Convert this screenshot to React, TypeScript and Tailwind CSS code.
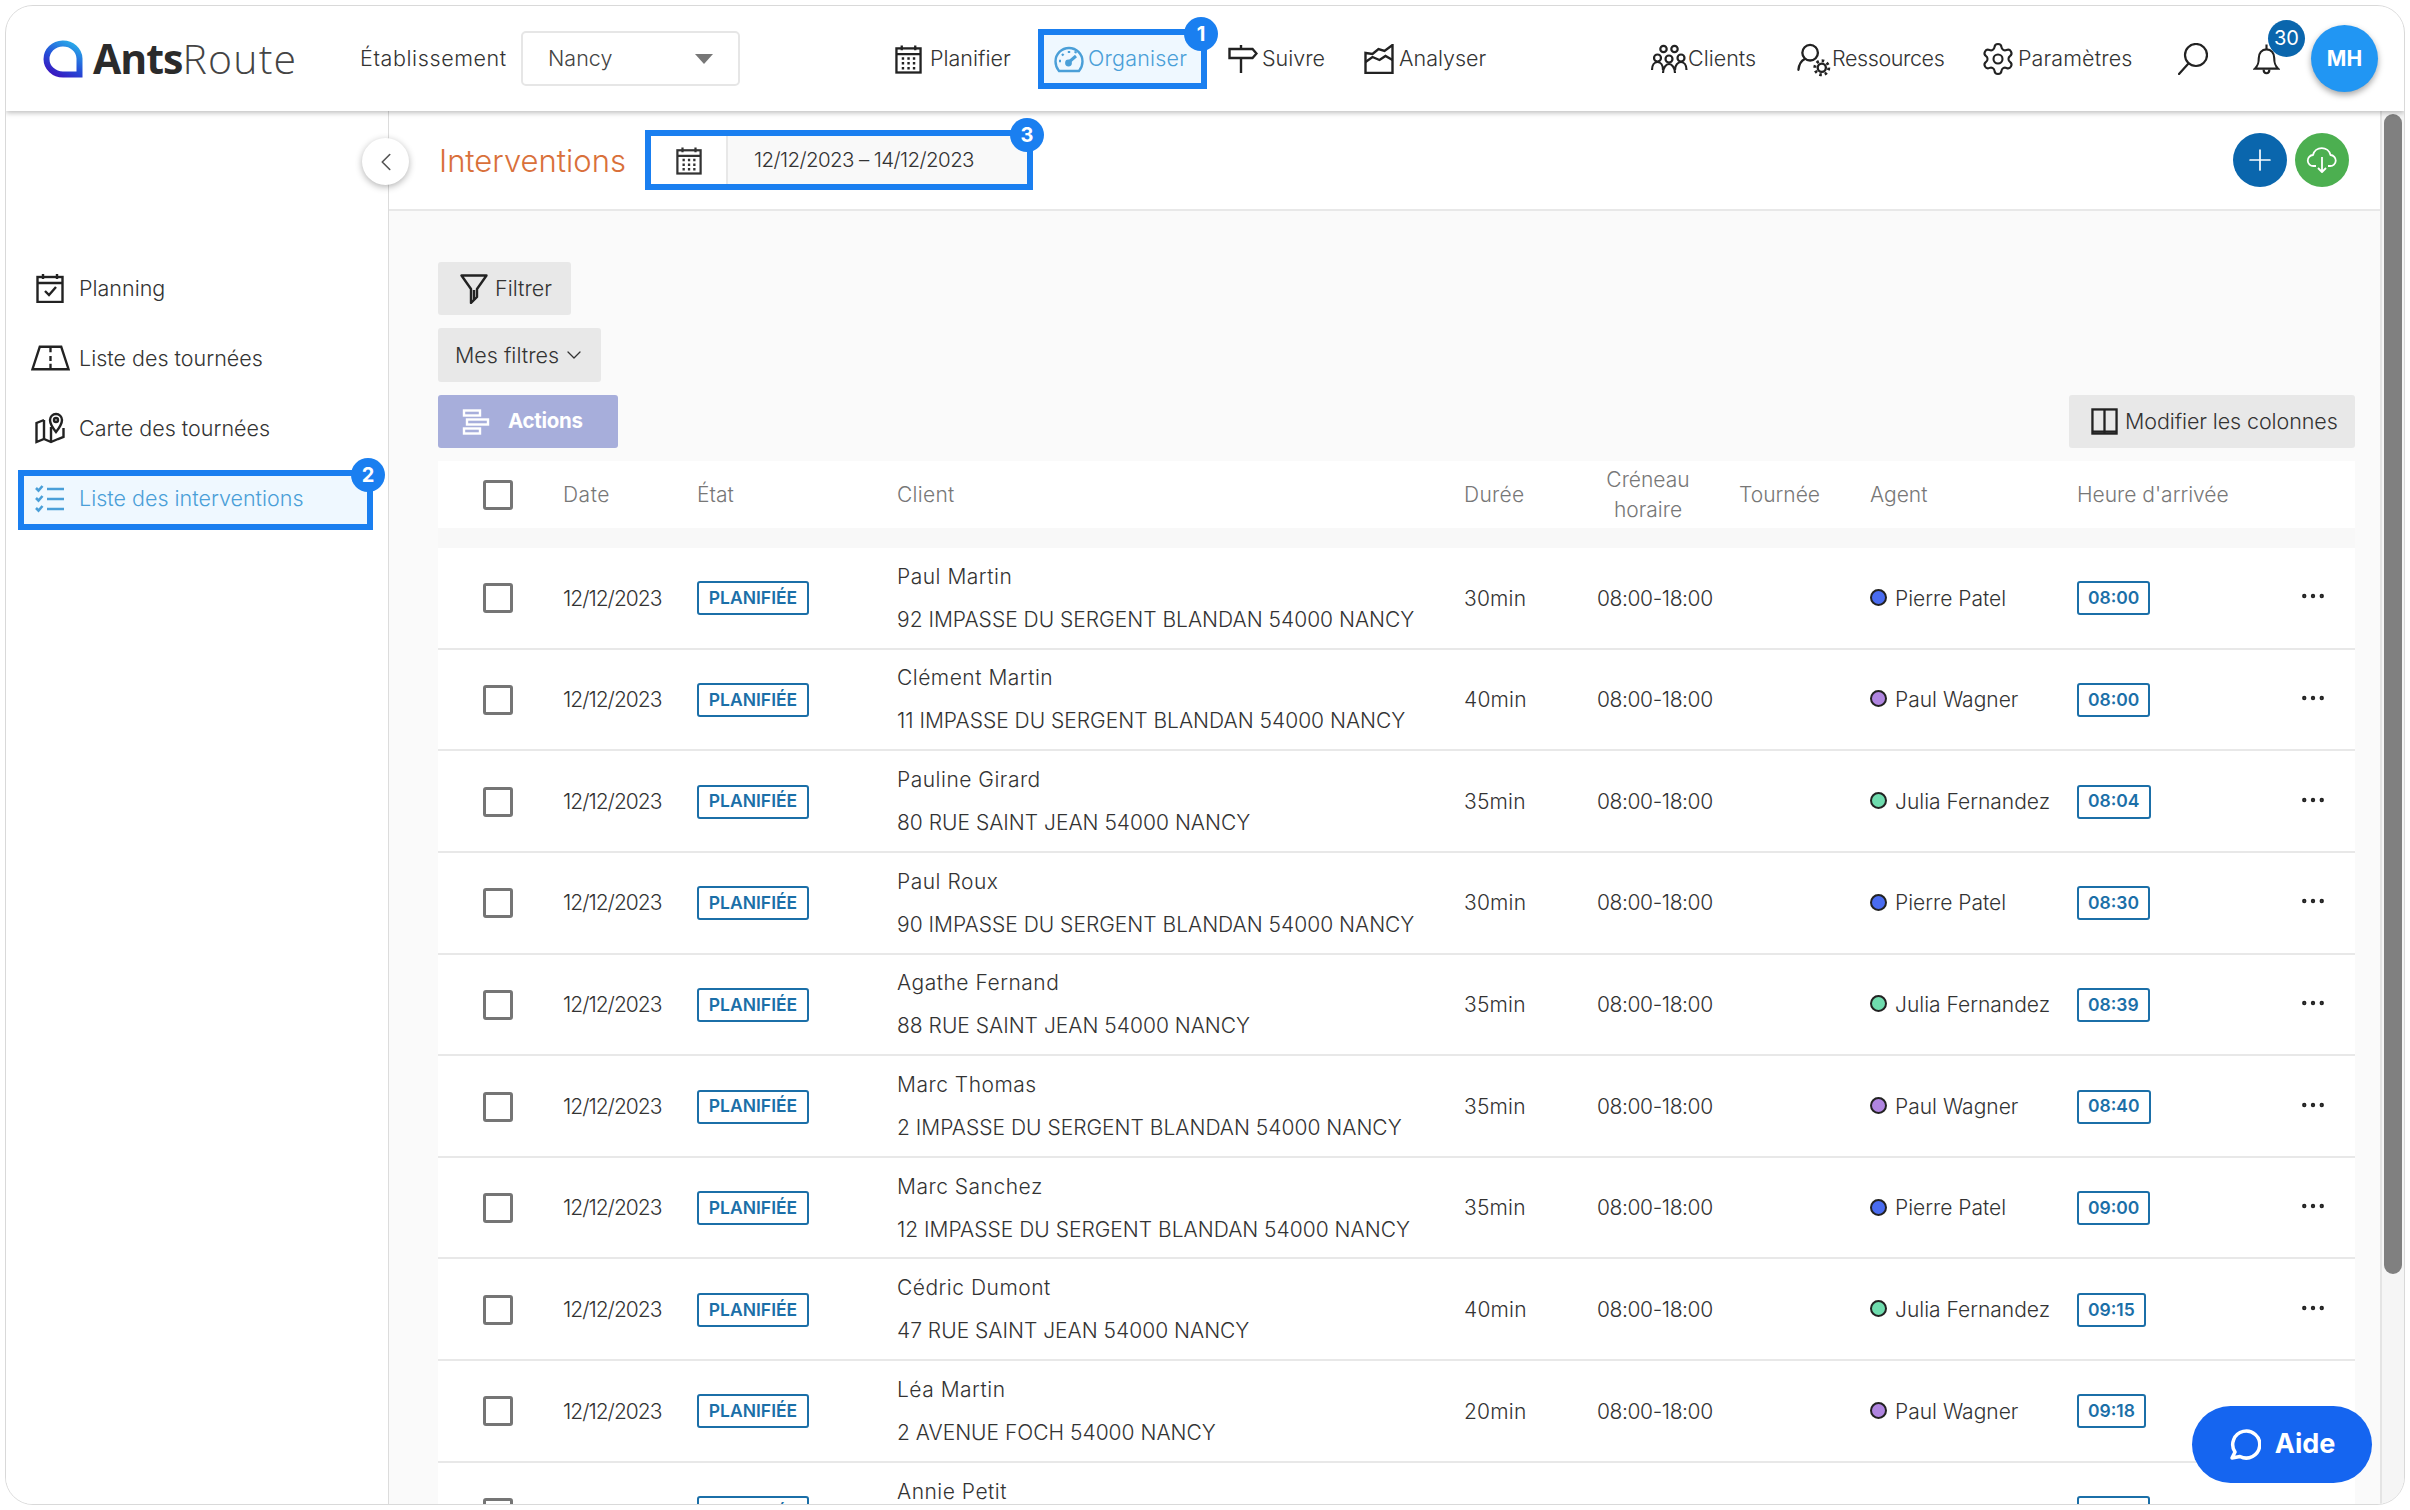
import React from 'react';
import { ChevronLeft, ChevronDown, Plus, MoreHorizontal, Settings } from 'lucide-react';

type IconProps = { className?: string };

const s = { fill: 'none', stroke: 'currentColor', strokeWidth: 2.4 };

const CalendarIcon: React.FC<IconProps> = ({ className }) => (
  <svg viewBox="0 0 28 30" className={className} {...s}>
    <rect x="1.5" y="4" width="25" height="25" />
    <path d="M1.500 10h25" />
    <path d="M7 1v5M21 1v5" />
    <path d="M7 14.500h2.500M12.800 14.500h2.500M18.500 14.500h2.500M7 19.500h2.500M12.800 19.500h2.500M18.500 19.500h2.500M7 24.500h2.500M12.800 24.500h2.500M18.500 24.500h2.500" strokeWidth="2.600" />
  </svg>
);

const GaugeIcon: React.FC<IconProps> = ({ className }) => (
  <svg viewBox="0 0 30 30" className={className} {...s}>
    <path d="M5 27C2.500 24 1.500 21 1.500 17.500a13.500 13.500 0 0 1 27 0C28.500 21 27.500 24 25 27Z" />
    <path d="M15 18l7-6" strokeWidth="3" />
    <circle cx="14.500" cy="19" r="2.200" fill="currentColor" />
    <path d="M5 17h2M8 10l1.500 1.500M15 7v2M22 7.500l-1 1.500" />
  </svg>
);

const SignIcon: React.FC<IconProps> = ({ className }) => (
  <svg viewBox="0 0 30 30" className={className} {...s}>
    <path d="M1.500 5h23l4 4.500-4 4.500h-23Z" />
    <path d="M13 1v4M13 14v15" />
  </svg>
);

const ChartIcon: React.FC<IconProps> = ({ className }) => (
  <svg viewBox="0 0 30 30" className={className} {...s}>
    <path d="M1.500 9v20h27V1l-8 6-6-2-6 5Z" />
    <path d="M1.500 18l7-5 7 3 6-4 7 4" />
  </svg>
);

const PeopleIcon: React.FC<IconProps> = ({ className }) => (
  <svg viewBox="0 0 38 30" className={className} fill="none" stroke="currentColor" strokeWidth="2.200">
    <circle cx="13.500" cy="5" r="3.200" />
    <circle cx="24.500" cy="5" r="3.200" />
    <circle cx="7.500" cy="14" r="3.500" />
    <circle cx="19" cy="15" r="3.500" />
    <circle cx="31" cy="14" r="3.500" />
    <path d="M2 26c0-5 2.500-8 5.500-8s5.500 3 5.500 8M13 29c0-5 3-9 6-9s6 4 6 9M25 26c0-5 3-8 6-8s5.500 3 5.500 8" />
  </svg>
);

const UserGearIcon: React.FC<IconProps> = ({ className }) => (
  <svg viewBox="0 0 36 34" className={className} fill="none" stroke="currentColor" strokeWidth="2.400">
    <circle cx="13.500" cy="9.500" r="8" />
    <path d="M8 16C4 18 2 22 1.500 27" strokeLinecap="round" />
    <circle cx="25.500" cy="25" r="4.200" />
    <circle cx="25.500" cy="25" r="7.200" strokeDasharray="2.600 3" strokeWidth="3" />
  </svg>
);

const SearchIcon: React.FC<IconProps> = ({ className }) => (
  <svg viewBox="0 0 30 32" className={className} fill="none" stroke="currentColor" strokeWidth="2.200">
    <circle cx="18" cy="12" r="11" />
    <path d="M10 21L1 31" strokeLinecap="round" />
  </svg>
);

const BellIcon: React.FC<IconProps> = ({ className }) => (
  <svg viewBox="0 0 28 32" className={className} fill="none" stroke="currentColor" strokeWidth="2.200">
    <path d="M2 26c3-3 4-5 4-11 0-5 3-9 8-9s8 4 8 9c0 6 1 8 4 11Z" />
    <path d="M14 1v5M11 27c0 5 6 5 6 0" />
  </svg>
);

const CloudIcon: React.FC<IconProps> = ({ className }) => (
  <svg viewBox="0 0 32 32" className={className} fill="none" stroke="currentColor" strokeWidth="1.800" strokeLinejoin="round">
    <path d="M10 22H7.500a5.500 5.500 0 0 1-.5-11 9 9 0 0 1 17.500 0 5.500 5.500 0 0 1-.5 11h-2" />
    <path d="M16 13v15M12 24l4 4 4-4" />
  </svg>
);

const PlanningIcon: React.FC<IconProps> = ({ className }) => (
  <svg viewBox="0 0 28 30" className={className} fill="none" stroke="currentColor" strokeWidth="2.400">
    <rect x="1.500" y="4" width="25" height="25" />
    <path d="M1.500 10h25M7 1v5M21 1v5" />
    <path d="M9 18l4 4 7-8" />
  </svg>
);

const RoadIcon: React.FC<IconProps> = ({ className }) => (
  <svg viewBox="0 0 40 26" className={className} fill="none" stroke="currentColor" strokeWidth="2.400">
    <path d="M9 1.500h22L38.500 24.500h-37Z" />
    <path d="M20 2v5M20 11v5M20 19v6" />
  </svg>
);

const MapIcon: React.FC<IconProps> = ({ className }) => (
  <svg viewBox="0 0 30 32" className={className} fill="none" stroke="currentColor" strokeWidth="2.400">
    <path d="M9 8L1.500 11v19l7.500-3 7 3 7-3 5.500-2V16" />
    <path d="M9 8v19M16 15v15" />
    <path d="M21 20c-4-5-6-8-6-12a6 6 0 0 1 12 0c0 4-2 7-6 12Z" fill="#fff" />
    <circle cx="21" cy="8" r="2" />
  </svg>
);

const ChecklistIcon: React.FC<IconProps> = ({ className }) => (
  <svg viewBox="0 0 30 28" className={className} fill="none" stroke="currentColor" strokeWidth="2.600">
    <path d="M12 4h17M12 14h17M12 24h17" />
    <path d="M1 3l2.500 2.500L7.500 1M1 13l2.500 2.500L7.500 11M1 23l2.500 2.500L7.500 21" />
  </svg>
);

const FunnelIcon: React.FC<IconProps> = ({ className }) => (
  <svg viewBox="0 0 28 30" className={className} fill="none" stroke="currentColor" strokeWidth="2.400" strokeLinejoin="round">
    <path d="M1.500 1.500h25L17 15v8l-6 6V15Z" />
    <path d="M14 16v10" />
  </svg>
);

const ActionsIcon: React.FC<IconProps> = ({ className }) => (
  <svg viewBox="0 0 28 26" className={className} fill="none" stroke="currentColor" strokeWidth="2.400">
    <rect x="2" y="1.500" width="16" height="5" />
    <rect x="5" y="10.500" width="21" height="5" />
    <rect x="2" y="19.500" width="16" height="5" />
  </svg>
);

const ColumnsIcon: React.FC<IconProps> = ({ className }) => (
  <svg viewBox="0 0 28 28" className={className} fill="none" stroke="currentColor" strokeWidth="2.400">
    <rect x="1.500" y="1.500" width="25" height="25" />
    <path d="M14 1.500v25" />
    <path d="M1.500 24.500h25" />
  </svg>
);

const Logo: React.FC = () => (
  <svg viewBox="0 0 40 38" className="w-[40px] h-[38px] shrink-0" fill="none">
    <defs>
      <linearGradient id="logoGrad" x1="0.8" y1="0" x2="0.2" y2="1">
        <stop offset="0" stopColor="#2aa7e8" />
        <stop offset="0.55" stopColor="#2450d8" />
        <stop offset="1" stopColor="#3a18c0" />
      </linearGradient>
    </defs>
    <path d="M36.500 34.500V18.500a16.500 15.500 0 1 0-16.500 16Z" stroke="url(#logoGrad)" strokeWidth="6" />
  </svg>
);

const Badge: React.FC<{ n: number; className: string }> = ({ n, className }) => (
  <span className={`absolute w-[34px] h-[34px] rounded-full bg-[#1a7ff0] text-white font-bold text-[20px] flex items-center justify-center z-20 ${className}`}>
    {n}
  </span>
);

const NavItem: React.FC<{ icon: React.ReactNode; label: string; className: string; labelClass?: string }> = ({ icon, label, className, labelClass }) => (
  <div className={`flex items-center shrink-0 ${className}`}>
    {icon}
    <span className={labelClass}>{label}</span>
  </div>
);

const SideItem: React.FC<{ icon: React.ReactNode; label: string }> = ({ icon, label }) => (
  <div className="flex items-center h-[70px] pl-[20px]">
    <div className="w-[48px] flex justify-center">{icon}</div>
    <span className="text-[21.5px] ml-[5px]">{label}</span>
  </div>
);

interface Row {
  name: string;
  address: string;
  duration: string;
  agent: 'Pierre Patel' | 'Paul Wagner' | 'Julia Fernandez';
  time: string;
}

const rows: Row[] = [
  { name: 'Paul Martin', address: '92 IMPASSE DU SERGENT BLANDAN 54000 NANCY', duration: '30min', agent: 'Pierre Patel', time: '08:00' },
  { name: 'Clément Martin', address: '11 IMPASSE DU SERGENT BLANDAN 54000 NANCY', duration: '40min', agent: 'Paul Wagner', time: '08:00' },
  { name: 'Pauline Girard', address: '80 RUE SAINT JEAN 54000 NANCY', duration: '35min', agent: 'Julia Fernandez', time: '08:04' },
  { name: 'Paul Roux', address: '90 IMPASSE DU SERGENT BLANDAN 54000 NANCY', duration: '30min', agent: 'Pierre Patel', time: '08:30' },
  { name: 'Agathe Fernand', address: '88 RUE SAINT JEAN 54000 NANCY', duration: '35min', agent: 'Julia Fernandez', time: '08:39' },
  { name: 'Marc Thomas', address: '2 IMPASSE DU SERGENT BLANDAN 54000 NANCY', duration: '35min', agent: 'Paul Wagner', time: '08:40' },
  { name: 'Marc Sanchez', address: '12 IMPASSE DU SERGENT BLANDAN 54000 NANCY', duration: '35min', agent: 'Pierre Patel', time: '09:00' },
  { name: 'Cédric Dumont', address: '47 RUE SAINT JEAN 54000 NANCY', duration: '40min', agent: 'Julia Fernandez', time: '09:15' },
  { name: 'Léa Martin', address: '2 AVENUE FOCH 54000 NANCY', duration: '20min', agent: 'Paul Wagner', time: '09:18' },
  { name: 'Annie Petit', address: '5 AVENUE FOCH 54000 NANCY', duration: '20min', agent: 'Pierre Patel', time: '09:30' },
];

const agentDot = (agent: Row['agent']) => {
  if (agent === 'Pierre Patel') return 'bg-[#4a6cf0]';
  if (agent === 'Paul Wagner') return 'bg-[#b085e0]';
  return 'bg-[#6fdcae]';
};

const gridCols = 'grid grid-cols-[125px_134px_200px_567px_133px_142px_131px_207px_225px_53px] items-center';

const Checkbox: React.FC = () => (
  <div className="w-[30px] h-[30px] ml-[45px] border-[3px] border-[#757575] rounded-[3px] bg-white" />
);

const Tag: React.FC<{ children: React.ReactNode; className: string }> = ({ children, className }) => (
  <span className={`flex items-center justify-center justify-self-start h-[34px] border-2 border-[#1b6fa8] rounded-[3px] text-[#1b6fa8] font-semibold text-[17.5px] ${className}`}>
    {children}
  </span>
);

export default function App() {
  return (
    <div className="w-[2410px] h-[1510px] bg-white p-[5px] font-['Inter','Liberation_Sans',sans-serif] text-[#333] overflow-hidden">
      <div className="relative flex flex-col h-full rounded-[28px] border border-[#d9d9d9] overflow-hidden font-light">
        {/* top bar */}
        <header className="relative z-10 flex items-center h-[105px] shrink-0 bg-white shadow-[0_2px_5px_rgba(0,0,0,0.25)] text-[21.5px]">
          <div className="flex items-center ml-[37px] w-[318px] shrink-0">
            <Logo />
            <span className="ml-[10px] text-[41px] leading-none text-[#2b2b2b] font-['Open_Sans',sans-serif]">
              <span className="font-bold tracking-[-1px]">Ants</span>
              <span className="font-light tracking-[1.2px] text-[#444]">Route</span>
            </span>
          </div>
          <span className="w-[160px] shrink-0 tracking-[0.6px] -ml-[1px] mr-[1px]">Établissement</span>
          <div className="flex items-center justify-between w-[219px] h-[55px] shrink-0 border-2 border-[#e6e6e6] rounded-[5px] px-[25px] text-[#444]">
            <span>Nancy</span>
            <span className="w-0 h-0 border-x-[9px] border-x-transparent border-t-[10px] border-t-[#777]" />
          </div>
          <NavItem className="ml-[155px] w-[143px]" icon={<CalendarIcon className="w-[27px] h-[30px] text-[#222] mr-[8px]" />} label="Planifier" />
          <div className="relative flex items-center w-[169px] h-[60px] shrink-0 border-[6px] border-[#1a7ff0] bg-[#eff8ff] pl-[10px] text-[#4a9fd8]">
            <GaugeIcon className="w-[30px] h-[30px] mr-[4px]" />
            <span className="tracking-[0.2px]">Organiser</span>
            <Badge n={1} className="right-[-17px] top-[-18px]" />
          </div>
          <NavItem className="ml-[21px] w-[136px]" icon={<SignIcon className="w-[30px] h-[30px] text-[#222] mr-[4px]" />} label="Suivre" />
          <NavItem className="w-[286px]" icon={<ChartIcon className="w-[30px] h-[30px] text-[#222] mr-[5px]" />} label="Analyser" />
          <NavItem className="w-[147px]" icon={<PeopleIcon className="w-[38px] h-[30px] text-[#222]" />} label="Clients" />
          <NavItem className="w-[185px]" icon={<UserGearIcon className="w-[35px] h-[34px] text-[#222] mt-[3px]" />} label="Ressources" labelClass="tracking-[-0.4px]" />
          <NavItem className="w-[196px]" icon={<Settings className="w-[36px] h-[36px] text-[#222] mr-[2px] -ml-[2px]" strokeWidth={1.4} />} label="Paramètres" labelClass="tracking-[0.1px]" />
          <SearchIcon className="w-[30px] h-[32px] shrink-0 text-[#222]" />
          <div className="relative ml-[45px] shrink-0">
            <BellIcon className="w-[27px] h-[32px] text-[#222]" />
            <span className="absolute left-[15px] top-[-23px] w-[37px] h-[37px] rounded-full bg-[#0a66ad] text-white text-[20px] font-normal flex items-center justify-center">30</span>
          </div>
          <div className="ml-[31px] w-[67px] h-[67px] shrink-0 rounded-full bg-[#2196f3] text-white text-[21px] font-bold flex items-center justify-center shadow-[0_3px_6px_rgba(0,0,0,0.35)]">MH</div>
        </header>

        <div className="flex flex-1 min-h-0">
          {/* left menu */}
          <aside className="relative w-[383px] shrink-0 bg-white border-r border-[#dcdcdc] pt-[142px] text-[#333]">
            <SideItem icon={<PlanningIcon className="w-[28px] h-[30px] text-[#222]" />} label="Planning" />
            <SideItem icon={<RoadIcon className="w-[39px] h-[26px] text-[#222]" />} label="Liste des tournées" />
            <SideItem icon={<MapIcon className="w-[30px] h-[32px] text-[#222]" />} label="Carte des tournées" />
            <div className="relative flex items-center w-[355px] h-[60px] ml-[12px] mt-[7px] border-[6px] border-[#1a7ff0] bg-[#eff8ff] pl-[2px] text-[#4a9fd8]">
              <div className="w-[48px] flex justify-center -mt-[2px]">
                <ChecklistIcon className="w-[30px] h-[28px]" />
              </div>
              <span className="text-[21.5px] ml-[5px] -mt-[3px]">Liste des interventions</span>
              <Badge n={2} className="right-[-18px] top-[-18px]" />
            </div>
            <div className="absolute z-10 right-[-21px] top-[27px] w-[47px] h-[47px] rounded-full bg-white flex items-center justify-center shadow-[0_2px_7px_rgba(0,0,0,0.3)] text-[#555]">
              <ChevronLeft className="w-[30px] h-[30px]" strokeWidth={1.3} />
            </div>
          </aside>

          <main className="flex-1 min-w-0 flex flex-col">
            {/* page title */}
            <div className="flex items-center h-[100px] shrink-0 bg-white border-b-2 border-[#e8e8e8] pl-[50px] pr-[31px]">
              <h1 className="text-[31px] font-light text-[#d9703a] w-[206px] shrink-0 mt-[2px]">Interventions</h1>
              <div className="relative flex items-center w-[388px] h-[60px] border-[6px] border-[#1a7ff0] bg-[#f9f9f9]">
                <div className="flex items-center justify-center w-[77px] h-full bg-white border-r-2 border-[#e8e8e8]">
                  <CalendarIcon className="w-[26px] h-[29px] text-[#333]" />
                </div>
                <span className="ml-[26px] text-[20.5px] tracking-[-0.6px]">12/12/2023 – 14/12/2023</span>
                <Badge n={3} className="right-[-17px] top-[-18px]" />
              </div>
              <div className="ml-auto flex gap-[8px]">
                <div className="w-[54px] h-[54px] rounded-full bg-[#0a66ad] flex items-center justify-center text-white">
                  <Plus className="w-[34px] h-[34px]" strokeWidth={1.2} />
                </div>
                <div className="w-[54px] h-[54px] rounded-full bg-[#4caf50] flex items-center justify-center text-white">
                  <CloudIcon className="w-[32px] h-[32px]" />
                </div>
              </div>
            </div>

            {/* list */}
            <div className="flex-1 min-h-0 overflow-hidden bg-[#fafafa] pl-[49px] pr-[25px] pt-[51px]">
              <button className="flex items-center w-[133px] h-[53px] bg-[#e8e8e8] rounded-[3px] pl-[22px] text-[21.5px] font-light">
                <FunnelIcon className="w-[28px] h-[30px] text-[#222]" />
                <span className="ml-[7px]">Filtrer</span>
              </button>
              <button className="flex items-center w-[163px] h-[54px] mt-[13px] bg-[#e8e8e8] rounded-[3px] pl-[17px] text-[21.5px] font-light">
                Mes filtres
                <ChevronDown className="w-[24px] h-[24px] ml-[3px]" strokeWidth={1.3} />
              </button>
              <div className="flex items-center justify-between mt-[13px]">
                <button className="flex items-center w-[180px] h-[53px] bg-[#a7aedb] rounded-[3px] pl-[24px] text-white font-bold text-[20.5px] tracking-[-0.3px]">
                  <ActionsIcon className="w-[28px] h-[26px]" />
                  <span className="ml-[18px]">Actions</span>
                </button>
                <button className="flex items-center w-[286px] h-[53px] bg-[#e8e8e8] rounded-[3px] pl-[22px] text-[21.5px] font-light">
                  <ColumnsIcon className="w-[27px] h-[27px] text-[#222]" />
                  <span className="ml-[7px] tracking-[-0.1px]">Modifier les colonnes</span>
                </button>
              </div>

              <div className={`${gridCols} h-[67px] mt-[13px] bg-white text-[#777] text-[21px]`}>
                <Checkbox />
                <span className="tracking-[0.5px]">Date</span>
                <span>État</span>
                <span className="tracking-[0.3px]">Client</span>
                <span className="tracking-[0.3px]">Durée</span>
                <span className="text-center leading-[30px] -ml-[16px] w-[134px]">Créneau<br />horaire</span>
                <span>Tournée</span>
                <span>Agent</span>
                <span>Heure d'arrivée</span>
                <span />
              </div>
              <div className="h-[20px] bg-[#f8f8f8]" />

              {rows.map((r) => (
                <div key={r.name} className={`${gridCols} h-[101.65px] pt-[1px] bg-white border-b-2 border-[#e8e8e8] text-[21px]`}>
                  <Checkbox />
                  <span className="tracking-[-1px]">12/12/2023</span>
                  <Tag className="w-[112px]">PLANIFIÉE</Tag>
                  <div className="flex flex-col gap-[13px] leading-[30px]">
                    <span className="tracking-[0.5px]">{r.name}</span>
                    <span>{r.address}</span>
                  </div>
                  <span className="tracking-[0.2px]">{r.duration}</span>
                  <span className="tracking-[-0.4px]">08:00-18:00</span>
                  <span />
                  <span className="flex items-center">
                    <span className={`w-[17px] h-[17px] rounded-full border-2 border-[#222] shrink-0 -mt-[2px] ${agentDot(r.agent)}`} />
                    <span className="ml-[8px]">{r.agent}</span>
                  </span>
                  <Tag className="px-[9px]">{r.time}</Tag>
                  <MoreHorizontal className="w-[30px] h-[30px] -mt-[4px] -ml-[4px] text-[#222]" strokeWidth={1.5} />
                </div>
              ))}
            </div>
          </main>

          {/* scrollbar */}
          <div className="w-[24px] shrink-0 bg-[#f5f5f5] border-l-2 border-[#e4e4e4] pt-[3px] pl-[2px]">
            <div className="w-[18px] h-[1160px] rounded-full bg-[#808080]" />
          </div>
        </div>

        {/* help button */}
        <div className="absolute z-30 right-[32px] bottom-[21px] flex items-center justify-center w-[180px] h-[77px] rounded-full bg-[#1565f0] text-white font-bold text-[27px]">
          <svg viewBox="0 0 32 34" className="w-[32px] h-[34px] mr-[14px]" fill="none" stroke="currentColor" strokeWidth="3.500" strokeLinejoin="round">
            <path d="M3 30l3-6a13.500 13.500 0 1 1 5 4.500Z" />
          </svg>
          Aide
        </div>
      </div>
    </div>
  );
}
